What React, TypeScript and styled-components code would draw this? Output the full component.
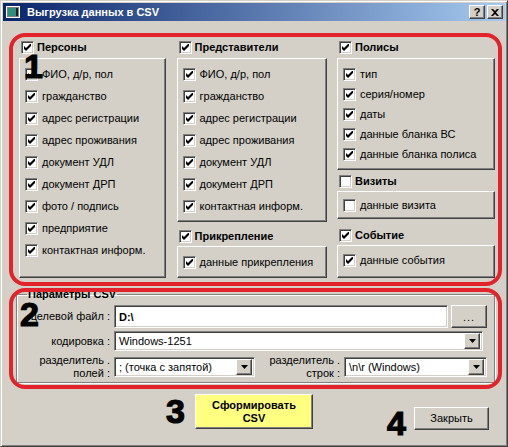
import React from "react";
import styled, { createGlobalStyle } from "styled-components";

const GlobalStyle = createGlobalStyle`
  html, body { margin: 0; padding: 0; background: #d4d0c8; }
  body { font-family: "Liberation Sans", Arial, sans-serif; font-size: 11px; color: #000; }
  * { box-sizing: border-box; }
`;

const Window = styled.div`
  position: relative;
  width: 508px;
  height: 447px;
  background: #d4d0c8;
  border: 1px solid;
  border-color: #d4d0c8 #404040 #404040 #d4d0c8;
  box-shadow: inset 1px 1px #fff, inset -1px -1px #808080;
  padding: 2px;
  display: flex;
  flex-direction: column;
  overflow: hidden;
`;

const TitleBar = styled.div`
  height: 18px;
  flex: none;
  display: flex;
  align-items: center;
  padding: 0 2px;
  background: linear-gradient(to right, #0a246a, #a6caf0);
`;

const TitleText = styled.div`
  margin-left: 6px;
  color: #fff;
  font-weight: bold;
  font-size: 11px;
  flex: 1;
  white-space: nowrap;
`;

const Raised = styled.div`
  background: #d4d0c8;
  border: 1px solid;
  border-color: #fff #404040 #404040 #fff;
  box-shadow: inset -1px -1px #808080;
`;

const CaptionButton = styled(Raised)`
  width: 16px;
  height: 14px;
  margin-left: 2px;
  display: flex;
  align-items: center;
  justify-content: center;
  font-weight: bold;
  font-size: 11px;
  line-height: 1;
`;

const Content = styled.div`
  flex: 1;
  display: flex;
  flex-direction: column;
  padding: 19px 10px 0 13px;
`;

const TopGrid = styled.div`
  margin-left: 3px;
  height: 237px;
  display: grid;
  grid-template-columns: 147px 150px 158px;
  column-gap: 10.5px;
  align-items: stretch;
`;

const Column = styled.div`
  display: flex;
  flex-direction: column;
`;

const Header = styled.div<{ $mt?: number }>`
  display: flex;
  align-items: center;
  gap: 3px;
  height: 14px;
  margin-top: ${(p) => p.$mt ?? 0}px;
  margin-bottom: ${(p) => (p.$mt === undefined ? 4 : 3)}px;
  padding-left: 2px;
  font-weight: bold;
`;

const Box = styled(Raised)<{ $grow?: boolean; $py?: number }>`
  flex: ${(p) => (p.$grow ? 1 : "none")};
  padding: ${(p) => p.$py ?? 4}px 4px;
  padding-left: 5px;
  display: flex;
  flex-direction: column;
`;

const Item = styled.div<{ $h: number }>`
  height: ${(p) => p.$h}px;
  display: flex;
  align-items: center;
  gap: 4px;
  white-space: nowrap;
`;

const CheckBox = styled.span`
  width: 13px;
  height: 13px;
  flex: none;
  display: inline-flex;
  align-items: center;
  justify-content: center;
  background: #fff;
  border: 1px solid;
  border-color: #808080 #fff #fff #808080;
  box-shadow: inset 1px 1px #404040, inset -1px -1px #d4d0c8;
`;

const Check = ({ on = true }: { on?: boolean }) => (
  <CheckBox>
    {on && (
      <svg width="7" height="7" viewBox="0 0 7 7">
        <path d="M0 2 L2 4 L7 -1 L7 2 L2 7 L0 5 Z" fill="#000" />
      </svg>
    )}
  </CheckBox>
);

const Fieldset = styled.fieldset`
  margin: 11px 0 0 0;
  padding: 4px 7px 2px 4px;
  border: 1px solid #808080;
  box-shadow: 1px 1px #fff, inset 1px 1px #fff;
  min-width: 0;
`;

const Legend = styled.legend`
  font-weight: bold;
  padding: 0 1px;
  margin-left: 6px;
  line-height: 13px;
`;

const FormRow = styled.div<{ $h: number; $mt?: number }>`
  display: grid;
  grid-template-columns: 89px 1fr auto;
  column-gap: 4px;
  align-items: center;
  height: ${(p) => p.$h}px;
  margin-top: ${(p) => p.$mt ?? 0}px;
`;

const SplitRow = styled.div`
  display: grid;
  grid-template-columns: 89px 141px 81px 1fr;
  column-gap: 4px;
  align-items: center;
  height: 26px;
  margin-top: 3px;
`;

const Label = styled.div`
  text-align: right;
  line-height: 13px;
  white-space: nowrap;
`;

const Sunken = styled.div<{ $h: number }>`
  height: ${(p) => p.$h}px;
  background: #fff;
  border: 1px solid;
  border-color: #808080 #fff #fff #808080;
  box-shadow: inset 1px 1px #404040, inset -1px -1px #d4d0c8;
  display: flex;
  align-items: center;
  padding: 2px 2px 2px 4px;
  white-space: nowrap;
  overflow: hidden;
`;

const InputText = styled.span`
  font-weight: bold;
`;

const ComboText = styled.span`
  flex: 1;
  overflow: hidden;
`;

const DropButton = styled(Raised)`
  width: 16px;
  height: 16px;
  flex: none;
  display: flex;
  align-items: center;
  justify-content: center;
`;

const BrowseButton = styled(Raised)`
  width: 36px;
  height: 23px;
  margin-left: -1px;
  display: flex;
  align-items: center;
  justify-content: center;
  letter-spacing: 1px;
`;

const Footer = styled.div`
  display: flex;
  align-items: flex-start;
  padding-left: 179px;
  margin-top: 11px;
`;

const ActionButton = styled(Raised)<{ $yellow?: boolean }>`
  background: ${(p) => (p.$yellow ? "#ffff80" : "#d4d0c8")};
  display: flex;
  align-items: center;
  justify-content: center;
  text-align: center;
  line-height: 13px;
`;

const MakeButton = styled(ActionButton)`
  width: 118px;
  height: 35px;
  font-weight: bold;
`;

const CloseButton = styled(ActionButton)`
  width: 75px;
  height: 23px;
  margin-left: auto;
  margin-top: 13px;
  margin-right: 6px;
`;

const Annotation = styled.div<{ $x: number; $y: number; $w: number; $h: number }>`
  position: absolute;
  left: ${(p) => p.$x}px;
  top: ${(p) => p.$y}px;
  width: ${(p) => p.$w}px;
  height: ${(p) => p.$h}px;
  border: 4px solid #e3232b;
  border-radius: 16px;
  pointer-events: none;
`;

const Numeral = styled.div<{ $x: number; $y: number }>`
  position: absolute;
  left: ${(p) => p.$x}px;
  top: ${(p) => p.$y}px;
  font-family: "Liberation Sans", Arial, sans-serif;
  font-weight: 900;
  font-size: 34px;
  line-height: 1;
  color: #000;
  -webkit-text-stroke: 1.2px #000;
  pointer-events: none;
`;

const Arrow = () => (
  <svg width="7" height="4" viewBox="0 0 7 4">
    <path d="M0 0 H7 L3.5 4 Z" fill="#000" />
  </svg>
);

const Combo = ({ text }: { text: string }) => (
  <Sunken $h={20}>
    <ComboText>{text}</ComboText>
    <DropButton>
      <Arrow />
    </DropButton>
  </Sunken>
);

const AppIcon = () => (
  <svg width="16" height="16" viewBox="0 0 16 16">
    <rect x="1" y="2" width="14" height="12" fill="#fff" />
    <rect x="2" y="3" width="12" height="10" fill="#808080" />
    <rect x="3" y="4" width="8" height="8" fill="#2f8f7f" />
    <rect x="11" y="4" width="2" height="8" fill="#202020" />
  </svg>
);

type Entry = { label: string; on?: boolean };

const persons: Entry[] = [
  { label: "ФИО, д/р, пол" },
  { label: "гражданство" },
  { label: "адрес регистрации" },
  { label: "адрес проживания" },
  { label: "документ УДЛ" },
  { label: "документ ДРП" },
  { label: "фото / подпись" },
  { label: "предприятие" },
  { label: "контактная информ." },
];

const reps: Entry[] = [
  { label: "ФИО, д/р, пол" },
  { label: "гражданство" },
  { label: "адрес регистрации" },
  { label: "адрес проживания" },
  { label: "документ УДЛ" },
  { label: "документ ДРП" },
  { label: "контактная информ." },
];

const policies: Entry[] = [
  { label: "тип" },
  { label: "серия/номер" },
  { label: "даты" },
  { label: "данные бланка ВС" },
  { label: "данные бланка полиса" },
];

const Items = ({ list, h }: { list: Entry[]; h: number }) => (
  <>
    {list.map((e) => (
      <Item key={e.label} $h={h}>
        <Check on={e.on !== false} />
        <span>{e.label}</span>
      </Item>
    ))}
  </>
);

export default function App() {
  return (
    <>
      <GlobalStyle />
      <Window>
        <TitleBar>
          <AppIcon />
          <TitleText>Выгрузка данных в CSV</TitleText>
          <CaptionButton>?</CaptionButton>
          <CaptionButton>
            <svg width="8" height="7" viewBox="0 0 8 7">
              <path d="M0 0 H2 L4 2 L6 0 H8 L5 3.5 L8 7 H6 L4 5 L2 7 H0 L3 3.5 Z" fill="#000" />
            </svg>
          </CaptionButton>
        </TitleBar>
        <Content>
          <TopGrid>
            <Column>
              <Header>
                <Check />
                <span>Персоны</span>
              </Header>
              <Box $grow>
                <Items list={persons} h={22} />
              </Box>
            </Column>
            <Column>
              <Header>
                <Check />
                <span>Представители</span>
              </Header>
              <Box>
                <Items list={reps} h={22} />
              </Box>
              <Header $mt={7}>
                <Check />
                <span>Прикрепление</span>
              </Header>
              <Box $grow>
                <Items list={[{ label: "данные прикрепления" }]} h={22} />
              </Box>
            </Column>
            <Column>
              <Header>
                <Check />
                <span>Полисы</span>
              </Header>
              <Box $py={5}>
                <Items list={policies} h={20} />
              </Box>
              <Header $mt={4}>
                <Check on={false} />
                <span>Визиты</span>
              </Header>
              <Box $py={3}>
                <Items list={[{ label: "данные визита", on: false }]} h={20} />
              </Box>
              <Header $mt={9}>
                <Check />
                <span>Событие</span>
              </Header>
              <Box $grow>
                <Items list={[{ label: "данные события" }]} h={20} />
              </Box>
            </Column>
          </TopGrid>

          <Fieldset>
            <Legend>Параметры CSV</Legend>
            <FormRow $h={23}>
              <Label>целевой файл :</Label>
              <Sunken $h={23}>
                <InputText>{"D:\\"}</InputText>
              </Sunken>
              <BrowseButton>...</BrowseButton>
            </FormRow>
            <FormRow $h={20} $mt={3}>
              <Label>кодировка :</Label>
              <Combo text="Windows-1251" />
              <span />
            </FormRow>
            <SplitRow>
              <Label>
                разделитель .
                <br />
                полей :
              </Label>
              <Combo text="; (точка с запятой)" />
              <Label>
                разделитель .
                <br />
                строк :
              </Label>
              <Combo text={"\\n\\r (Windows)"} />
            </SplitRow>
          </Fieldset>

          <Footer>
            <MakeButton $yellow>
              Сформировать
              <br />
              CSV
            </MakeButton>
            <CloseButton>Закрыть</CloseButton>
          </Footer>
        </Content>

        <Annotation $x={8} $y={32} $w={493} $h={253} />
        <Annotation $x={8} $y={287} $w={493} $h={101} />
        <Numeral $x={23} $y={48}>1</Numeral>
        <Numeral $x={19} $y={296}>2</Numeral>
        <Numeral $x={165} $y={393}>3</Numeral>
        <Numeral $x={386} $y={405}>4</Numeral>
      </Window>
    </>
  );
}
